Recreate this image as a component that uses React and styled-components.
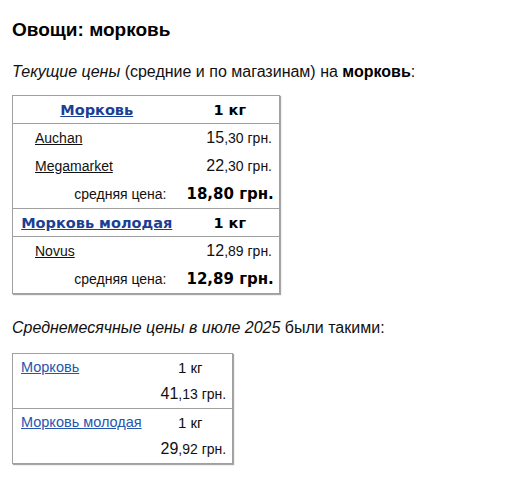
import React from 'react';
import styled, { createGlobalStyle } from 'styled-components';

const GlobalStyle = createGlobalStyle`
    body {
        margin: 0;
        background: #ffffff;
        font-family: "Liberation Sans", Arial, sans-serif;
        color: #111111;
    }
`;

const Page = styled.div`
    padding: 19px 12px 20px;
`;

const Title = styled.h3`
    margin: 0;
    font-size: 19px;
    line-height: 22px;
    font-weight: bold;
    color: #000000;
`;

const Lead = styled.p`
    margin: ${(p) => p.top}px 0 0;
    font-size: 16px;
    line-height: 18px;

    i {
        font-style: italic;
    }

    b {
        font-weight: bold;
        color: #000000;
    }
`;

const PriceTable = styled.table`
    margin-top: ${(p) => p.top}px;
    width: ${(p) => p.width}px;
    border-collapse: collapse;
    border: 1px solid #a0a0a0;
    box-shadow: 1px 1px 1px rgba(0, 0, 0, 0.35);
    table-layout: fixed;
`;

const Row = styled.tr`
    height: ${(p) => p.h}px;
    border-top: ${(p) => (p.sep ? '1px solid #a0a0a0' : 'none')};
`;

const Cell = styled.td`
    padding: 0 ${(p) => p.pr ?? 6}px 0 ${(p) => p.pl ?? 6}px;
    text-align: ${(p) => p.align || 'left'};
    vertical-align: middle;
    font-size: ${(p) => p.size || 14}px;
    white-space: nowrap;
`;

const HeadLink = styled.a`
    font-family: "DejaVu Sans", Verdana, sans-serif;
    font-weight: bold;
    font-size: 14.5px;
    color: #1a3f94;
    text-decoration: underline;
`;

const HeadUnit = styled.span`
    font-family: "DejaVu Sans", Verdana, sans-serif;
    font-weight: bold;
    font-size: 14.5px;
    color: #000000;
`;

const ShopLink = styled.a`
    color: #111111;
    text-decoration: underline;
    font-size: 14px;
`;

const ItemLink = styled.a`
    color: #2456b0;
    text-decoration: underline;
    font-size: 14.5px;
`;

const Big = styled.span`
    font-size: 16px;
`;

const Avg = styled.span`
    font-family: "DejaVu Sans", Verdana, sans-serif;
    font-weight: bold;
    font-size: 15px;
    color: #000000;
`;

const Price = ({ value }) => {
    const [whole, rest] = value.split(',');
    return (
        <span>
            <Big>{whole}</Big>,{rest} грн.
        </span>
    );
};

const current = [
    {
        name: 'Морковь',
        shops: [
            { shop: 'Auchan', price: '15,30' },
            { shop: 'Megamarket', price: '22,30' },
        ],
        avg: '18,80',
    },
    {
        name: 'Морковь молодая',
        shops: [{ shop: 'Novus', price: '12,89' }],
        avg: '12,89',
    },
];

const monthly = [
    { name: 'Морковь', price: '41,13' },
    { name: 'Морковь молодая', price: '29,92' },
];

const App = () => {
    return (
        <Page>
            <GlobalStyle />
            <Title>Овощи: морковь</Title>
            <Lead top={22}>
                <i>Текущие цены</i> (средние и по магазинам) на <b>морковь</b>:
            </Lead>

            <PriceTable top={14} width={268}>
                <colgroup>
                    <col style={{ width: 168 }} />
                    <col />
                </colgroup>
                <tbody>
                    {current.map((item, i) => (
                        <React.Fragment key={item.name}>
                            <Row h={28} sep={i > 0}>
                                <Cell align="center">
                                    <HeadLink href="#">{item.name}</HeadLink>
                                </Cell>
                                <Cell align="center">
                                    <HeadUnit>1 кг</HeadUnit>
                                </Cell>
                            </Row>
                            {item.shops.map((s, j) => (
                                <Row h={28} sep={j === 0} key={s.shop}>
                                    <Cell pl={22}>
                                        <ShopLink href="#">{s.shop}</ShopLink>
                                    </Cell>
                                    <Cell align="right" pr={7}>
                                        <Price value={s.price} />
                                    </Cell>
                                </Row>
                            ))}
                            <Row h={29}>
                                <Cell align="right" pr={14}>средняя цена:</Cell>
                                <Cell align="right" pr={7}>
                                    <Avg>{item.avg} грн.</Avg>
                                </Cell>
                            </Row>
                        </React.Fragment>
                    ))}
                </tbody>
            </PriceTable>

            <Lead top={25}>
                <i>Среднемесячные цены в июле 2025</i> были такими:
            </Lead>

            <PriceTable top={16} width={221}>
                <colgroup>
                    <col style={{ width: 148 }} />
                    <col />
                </colgroup>
                <tbody>
                    {monthly.map((m, i) => (
                        <React.Fragment key={m.name}>
                            <Row h={27} sep={i > 0}>
                                <Cell pl={8}>
                                    <ItemLink href="#">{m.name}</ItemLink>
                                </Cell>
                                <Cell align="center" pl={0} pr={12} size={15}>1 кг</Cell>
                            </Row>
                            <Row h={28}>
                                <Cell />
                                <Cell align="right" pl={0} pr={9}>
                                    <Price value={m.price} />
                                </Cell>
                            </Row>
                        </React.Fragment>
                    ))}
                </tbody>
            </PriceTable>
        </Page>
    );
};

export default App;
